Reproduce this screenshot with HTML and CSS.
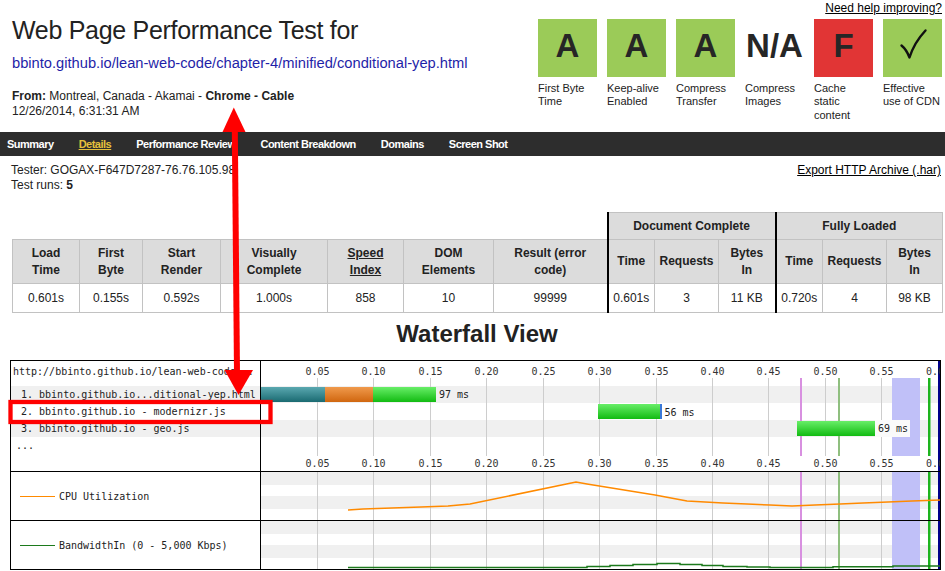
FILE: index.html
```html
<!DOCTYPE html>
<html lang="en">
<head>
<meta charset="utf-8">
<title>Web Page Performance Test</title>
<link rel="stylesheet" href="styles.css">
</head>
<body>
<div class="page">
  <header class="top">
    <div class="test-info">
      <h1 class="title">Web Page Performance Test for</h1>
      <a class="test-url" href="#">bbinto.github.io/lean-web-code/chapter-4/minified/conditional-yep.html</a>
      <div class="from"><b>From:</b> Montreal, Canada - Akamai - <b>Chrome - Cable</b><br>12/26/2014, 6:31:31 AM</div>
    </div>
    <div class="grades">
      <a class="help" href="#">Need help improving?</a>
      <ul class="grade-list">
        <li class="grade"><div class="grade-box grade-a">A</div><div class="grade-label">First Byte<br>Time</div></li>
        <li class="grade"><div class="grade-box grade-a">A</div><div class="grade-label">Keep-alive<br>Enabled</div></li>
        <li class="grade"><div class="grade-box grade-a">A</div><div class="grade-label">Compress<br>Transfer</div></li>
        <li class="grade"><div class="grade-box">N/A</div><div class="grade-label">Compress<br>Images</div></li>
        <li class="grade"><div class="grade-box grade-f">F</div><div class="grade-label">Cache<br>static<br>content</div></li>
        <li class="grade"><div class="grade-box grade-a"><svg class="check-icon" width="59" height="58" viewBox="0 0 59 58" role="img" aria-label="✓"><path d="M18.5,26.5 C21,28.5 24,32 26.5,38.5 C29.5,29 35,19.5 42.5,11.5" fill="none" stroke="#111" stroke-width="2.4" stroke-linecap="round" stroke-linejoin="round"/></svg></div><div class="grade-label">Effective<br>use of CDN</div></li>
      </ul>
    </div>
  </header>

  <nav class="tabs">
    <a class="tab" href="#">Summary</a>
    <a class="tab tab-active" href="#">Details</a>
    <a class="tab" href="#">Performance Review</a>
    <a class="tab" href="#">Content Breakdown</a>
    <a class="tab" href="#">Domains</a>
    <a class="tab" href="#">Screen Shot</a>
  </nav>

  <div class="run-info">
    <div class="run-meta">Tester: GOGAX-F647D7287-76.76.105.98<br>Test runs: <b>5</b></div>
    <a class="export" href="#">Export HTTP Archive (.har)</a>
  </div>

  <table class="results">
    <colgroup>
      <col style="width:67px"><col style="width:63px"><col style="width:78px"><col style="width:107px"><col style="width:76px"><col style="width:90px"><col style="width:114px"><col style="width:47px"><col style="width:64px"><col style="width:57px"><col style="width:47px"><col style="width:64px"><col style="width:56px">
    </colgroup>
    <tr class="row-group">
      <th class="blank" colspan="7"></th>
      <th class="sep" colspan="3">Document Complete</th>
      <th class="sep" colspan="3">Fully Loaded</th>
    </tr>
    <tr class="row-head">
      <th>Load<br>Time</th>
      <th>First<br>Byte</th>
      <th>Start<br>Render</th>
      <th>Visually<br>Complete</th>
      <th><u>Speed<br>Index</u></th>
      <th>DOM<br>Elements</th>
      <th>Result (error<br>code)</th>
      <th class="sep">Time</th>
      <th>Requests</th>
      <th>Bytes<br>In</th>
      <th class="sep">Time</th>
      <th>Requests</th>
      <th>Bytes<br>In</th>
    </tr>
    <tr class="row-data">
      <td>0.601s</td>
      <td>0.155s</td>
      <td>0.592s</td>
      <td>1.000s</td>
      <td>858</td>
      <td>10</td>
      <td>99999</td>
      <td class="sep">0.601s</td>
      <td>3</td>
      <td>11 KB</td>
      <td class="sep">0.720s</td>
      <td>4</td>
      <td>98 KB</td>
    </tr>
  </table>

  <h2 class="wf-title">Waterfall View</h2>

  <div class="waterfall">
    <section class="wf-section">
      <div class="wf-labels">
        <div class="wf-head">http://bbinto.github.io/lean-web-code...</div>
        <div class="wf-row wf-row-alt">1. bbinto.github.io...ditional-yep.html</div>
        <div class="wf-row">2. bbinto.github.io - modernizr.js</div>
        <div class="wf-row wf-row-alt">3. bbinto.github.io - geo.js</div>
        <div class="wf-row wf-dots">...</div>
      </div>
      <svg class="wf-chart" width="679" height="110" viewBox="0 0 679 110">
        <defs>
          <linearGradient id="barTeal" x1="0" y1="0" x2="0" y2="1"><stop offset="0" stop-color="#5aa8b0"/><stop offset="1" stop-color="#1a6a71"/></linearGradient>
          <linearGradient id="barOrange" x1="0" y1="0" x2="0" y2="1"><stop offset="0" stop-color="#f09a4c"/><stop offset="1" stop-color="#d0660f"/></linearGradient>
          <linearGradient id="barGreen" x1="0" y1="0" x2="0" y2="1"><stop offset="0" stop-color="#68ee68"/><stop offset="1" stop-color="#12bb12"/></linearGradient>
        </defs>
        <rect x="0" y="25" width="679" height="17" fill="#f0f0f0"/>
        <rect x="0" y="59" width="679" height="17" fill="#f0f0f0"/>
        <rect x="631" y="17" width="28" height="78" fill="#c0c0f8"/>
        <g stroke="#cdcdcd" stroke-width="1">
          <line x1="56.5" y1="17" x2="56.5" y2="95"/>
          <line x1="112.5" y1="17" x2="112.5" y2="95"/>
          <line x1="169.5" y1="17" x2="169.5" y2="95"/>
          <line x1="225.5" y1="17" x2="225.5" y2="95"/>
          <line x1="282.5" y1="17" x2="282.5" y2="95"/>
          <line x1="338.5" y1="17" x2="338.5" y2="95"/>
          <line x1="395.5" y1="17" x2="395.5" y2="95"/>
          <line x1="451.5" y1="17" x2="451.5" y2="95"/>
          <line x1="507.5" y1="17" x2="507.5" y2="95"/>
          <line x1="564.5" y1="17" x2="564.5" y2="95"/>
          <line x1="620.5" y1="17" x2="620.5" y2="95"/>
        </g>
        <rect x="539" y="17" width="2" height="78" fill="#d890e0"/>
        <rect x="577" y="17" width="2" height="78" fill="#8fbf7f"/>
        <rect x="667" y="17" width="2.5" height="78" fill="#1eb41e"/>
        <rect x="677" y="0" width="2" height="110" fill="#00008b"/>
        <g class="axis">
          <text x="56.5" y="13.5">0.05</text>
          <text x="112.5" y="13.5">0.10</text>
          <text x="169.5" y="13.5">0.15</text>
          <text x="225.5" y="13.5">0.20</text>
          <text x="282.5" y="13.5">0.25</text>
          <text x="338.5" y="13.5">0.30</text>
          <text x="395.5" y="13.5">0.35</text>
          <text x="451.5" y="13.5">0.40</text>
          <text x="507.5" y="13.5">0.45</text>
          <text x="564.5" y="13.5">0.50</text>
          <text x="620.5" y="13.5">0.55</text>
          <text x="677" y="13.5">0.60</text>
          <text x="56.5" y="106">0.05</text>
          <text x="112.5" y="106">0.10</text>
          <text x="169.5" y="106">0.15</text>
          <text x="225.5" y="106">0.20</text>
          <text x="282.5" y="106">0.25</text>
          <text x="338.5" y="106">0.30</text>
          <text x="395.5" y="106">0.35</text>
          <text x="451.5" y="106">0.40</text>
          <text x="507.5" y="106">0.45</text>
          <text x="564.5" y="106">0.50</text>
          <text x="620.5" y="106">0.55</text>
          <text x="677" y="106">0.60</text>
        </g>
        <rect x="0" y="26" width="64" height="15" fill="url(#barTeal)"/>
        <rect x="64" y="26" width="48" height="15" fill="url(#barOrange)"/>
        <rect x="112" y="26" width="63" height="15" fill="url(#barGreen)"/>
        <text class="bar-label" x="178" y="37">97 ms</text>
        <rect x="337" y="43" width="62" height="15" fill="url(#barGreen)"/>
        <rect x="399" y="43" width="2" height="15" fill="#3a78d8"/>
        <text class="bar-label" x="403.5" y="54.5">56 ms</text>
        <rect x="614" y="59" width="35" height="17" fill="#fafafa"/>
        <rect x="536" y="60" width="78" height="15" fill="url(#barGreen)"/>
        <text class="bar-label" x="617" y="71">69 ms</text>
      </svg>
    </section>

    <section class="wf-section">
      <div class="wf-labels wf-legend">
        <span class="wf-swatch wf-swatch-cpu"></span>
        <span>CPU Utilization</span>
      </div>
      <svg class="wf-chart" width="679" height="48" viewBox="0 0 679 48">
        <rect x="0" y="0" width="679" height="13" fill="#f0f0f0"/>
        <rect x="0" y="24" width="679" height="13" fill="#f0f0f0"/>
        <rect x="631" y="0" width="28" height="48" fill="#c0c0f8"/>
        <g stroke="#cdcdcd" stroke-width="1">
          <line x1="56.5" y1="0" x2="56.5" y2="48"/>
          <line x1="112.5" y1="0" x2="112.5" y2="48"/>
          <line x1="169.5" y1="0" x2="169.5" y2="48"/>
          <line x1="225.5" y1="0" x2="225.5" y2="48"/>
          <line x1="282.5" y1="0" x2="282.5" y2="48"/>
          <line x1="338.5" y1="0" x2="338.5" y2="48"/>
          <line x1="395.5" y1="0" x2="395.5" y2="48"/>
          <line x1="451.5" y1="0" x2="451.5" y2="48"/>
          <line x1="507.5" y1="0" x2="507.5" y2="48"/>
          <line x1="564.5" y1="0" x2="564.5" y2="48"/>
          <line x1="620.5" y1="0" x2="620.5" y2="48"/>
        </g>
        <rect x="539" y="0" width="2" height="48" fill="#d890e0"/>
        <rect x="577" y="0" width="2" height="48" fill="#8fbf7f"/>
        <rect x="667" y="0" width="2.5" height="48" fill="#1eb41e"/>
        <rect x="677" y="0" width="2" height="48" fill="#00008b"/>
        <polyline fill="none" stroke="#ff8a00" stroke-width="1.5" points="87,38 102,37 131,36 160,35 187,34 209,32 315,10 326,12 394,23 426,29 462,31 486,32 509,33 531,34 554,33 579,32 602,31 627,30 651,29 679,28"/>
      </svg>
    </section>

    <section class="wf-section">
      <div class="wf-labels wf-legend">
        <span class="wf-swatch wf-swatch-bw"></span>
        <span>BandwidthIn (0 - 5,000 Kbps)</span>
      </div>
      <svg class="wf-chart" width="679" height="48" viewBox="0 0 679 48">
        <rect x="0" y="0" width="679" height="13" fill="#f0f0f0"/>
        <rect x="0" y="24" width="679" height="13" fill="#f0f0f0"/>
        <rect x="631" y="0" width="28" height="48" fill="#c0c0f8"/>
        <g stroke="#cdcdcd" stroke-width="1">
          <line x1="56.5" y1="0" x2="56.5" y2="48"/>
          <line x1="112.5" y1="0" x2="112.5" y2="48"/>
          <line x1="169.5" y1="0" x2="169.5" y2="48"/>
          <line x1="225.5" y1="0" x2="225.5" y2="48"/>
          <line x1="282.5" y1="0" x2="282.5" y2="48"/>
          <line x1="338.5" y1="0" x2="338.5" y2="48"/>
          <line x1="395.5" y1="0" x2="395.5" y2="48"/>
          <line x1="451.5" y1="0" x2="451.5" y2="48"/>
          <line x1="507.5" y1="0" x2="507.5" y2="48"/>
          <line x1="564.5" y1="0" x2="564.5" y2="48"/>
          <line x1="620.5" y1="0" x2="620.5" y2="48"/>
        </g>
        <rect x="539" y="0" width="2" height="48" fill="#d890e0"/>
        <rect x="577" y="0" width="2" height="48" fill="#8fbf7f"/>
        <rect x="667" y="0" width="2.5" height="48" fill="#1eb41e"/>
        <rect x="677" y="0" width="2" height="48" fill="#00008b"/>
        <polyline fill="none" stroke="#1c7a1c" stroke-width="1.5" points="87,46.5 326,46.5 326,45.5 349,45.5 349,44.5 372,44.5 372,43.5 396,43.5 396,42.5 419,42.5 419,43.5 441,43.5 441,44.5 462,44.5 462,45.5 486,45.5 486,46 509,46 509,46.5 572,46.5 572,45.8 632,45.8 632,45 679,45"/>
      </svg>
    </section>
  </div>

  <svg class="annotation" width="945" height="571" viewBox="0 0 945 571" aria-hidden="true">
    <line x1="234.8" y1="128" x2="237" y2="373" stroke="#ff0000" stroke-width="6"/>
    <polygon points="233.8,107.5 222.5,132 245.5,132" fill="#ff0000"/>
    <polygon points="224.5,370 253,370 238.5,395" fill="#ff0000"/>
    <rect x="10.5" y="402" width="260" height="20" fill="none" stroke="#ff0000" stroke-width="4.3"/>
  </svg>
</div>
</body>
</html>
```

FILE: styles.css
```css
* { box-sizing: border-box; }

html, body {
  margin: 0;
  padding: 0;
  background: #fff;
}

body {
  font-family: "Liberation Sans", Arial, sans-serif;
  color: #222;
}

.page {
  position: relative;
  width: 945px;
  height: 571px;
  overflow: hidden;
}

/* ---------- header ---------- */
.top {
  display: flex;
  justify-content: space-between;
  height: 132px;
  padding: 0 3px 0 12px;
}

.title {
  margin: 16px 0 0;
  font-size: 25px;
  line-height: 29px;
  font-weight: normal;
  letter-spacing: -0.3px;
  color: #222;
}

.test-url {
  display: block;
  margin-top: 9px;
  font-size: 14.7px;
  line-height: 18px;
  color: #1f1fa8;
  text-decoration: none;
}

.from {
  margin-top: 17px;
  font-size: 12px;
  line-height: 15px;
}

.grades {
  display: flex;
  flex-direction: column;
  align-items: flex-end;
  padding-top: 1px;
}

.help {
  font-size: 12px;
  line-height: 14px;
  color: #000;
  text-decoration: underline;
}

.grade-list {
  display: flex;
  gap: 10px;
  margin: 4px 0 0;
  padding: 0;
  list-style: none;
}

.grade {
  width: 59px;
}

.grade-box {
  height: 58px;
  line-height: 54px;
  text-align: center;
  font-size: 33px;
  font-weight: bold;
  color: #262626;
}

.grade-a { background: #9bcb58; }
.grade-f { background: #e13535; }

.check-icon {
  display: block;
}

.grade-label {
  margin-top: 5px;
  font-size: 11px;
  line-height: 13.3px;
  color: #222;
}

/* ---------- tabs ---------- */
.tabs {
  display: flex;
  gap: 25px;
  height: 24px;
  padding-left: 7px;
  background: #2d2d2d;
}

.tab {
  font-size: 11px;
  font-weight: bold;
  letter-spacing: -0.5px;
  line-height: 24px;
  color: #fff;
  text-decoration: none;
}

.tab-active {
  color: #e6c13c;
  text-decoration: underline;
}

/* ---------- run info ---------- */
.run-info {
  display: flex;
  justify-content: space-between;
  margin-top: 7px;
  padding: 0 4px 0 11px;
  font-size: 12px;
  line-height: 15px;
}

.export {
  color: #000;
  text-decoration: underline;
}

/* ---------- results table ---------- */
.results {
  margin: 19px 0 0 12px;
  width: 930px;
  table-layout: fixed;
  border-collapse: collapse;
  font-size: 12px;
  color: #222;
}

.results th,
.results td {
  border: 1px solid #c2c2c2;
  text-align: center;
  vertical-align: middle;
  padding: 0;
}

.results th {
  background: #dcdcdc;
  font-weight: bold;
  line-height: 16.6px;
}

.results th.blank {
  background: none;
  border: none;
}

.results .sep {
  border-left: 2px solid #000;
}

.row-group th { height: 27px; }
.row-head th { height: 44px; }
.row-data td { height: 29px; }

/* ---------- waterfall ---------- */
.wf-title {
  margin: 7px 0 0 12px;
  width: 930px;
  text-align: center;
  font-size: 24px;
  line-height: 28px;
  font-weight: bold;
  color: #222;
}

.waterfall {
  margin: 12px 0 0 10px;
  width: 931px;
  border: 1px solid #000;
  font-family: "DejaVu Sans Mono", monospace;
  font-size: 10px;
  color: #222;
}

.wf-section {
  display: flex;
}

.wf-section + .wf-section {
  border-top: 1px solid #000;
}

.wf-labels {
  flex: none;
  width: 250px;
  border-right: 1px solid #000;
}

.wf-chart {
  display: block;
  flex: none;
}

.wf-head {
  height: 25px;
  line-height: 21px;
  padding-left: 2px;
  white-space: pre;
}

.wf-row {
  height: 17px;
  line-height: 17px;
  padding-left: 10px;
  white-space: pre;
}

.wf-row-alt { background: #f0f0f0; }

.wf-dots { padding-left: 5px; }

.wf-legend {
  display: flex;
  align-items: center;
  gap: 4px;
  height: 48px;
  padding-left: 9px;
}

.wf-swatch {
  display: block;
  width: 35px;
  height: 1px;
}

.wf-swatch-cpu { background: #ff8a00; }
.wf-swatch-bw { background: #1c7a1c; }

.axis text {
  font-family: "DejaVu Sans Mono", monospace;
  font-size: 10px;
  text-anchor: middle;
  fill: #333;
}

.bar-label {
  font-family: "DejaVu Sans Mono", monospace;
  font-size: 10px;
  fill: #222;
}

/* ---------- annotation overlay ---------- */
.annotation {
  position: absolute;
  top: 0;
  left: 0;
  pointer-events: none;
}
```
